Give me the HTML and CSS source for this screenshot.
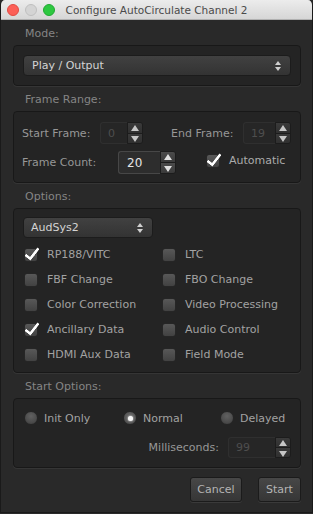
FILE: index.html
```html
<!DOCTYPE html>
<html lang="en">
<head>
  <meta charset="UTF-8">
  <title>Configure AutoCirculate Channel 2</title>
  <link rel="stylesheet" href="styles.css">
</head>
<body>
  <div class="window">
    <header class="titlebar">
      <div class="lights">
        <span class="light red"></span>
        <span class="light idle"></span>
        <span class="light green"></span>
      </div>
      <div class="title">Configure AutoCirculate Channel 2</div>
    </header>

    <main class="content">
      <div class="section-label">Mode:</div>
      <div class="group mode-group">
        <div class="select select-wide">
          <span>Play / Output</span>
          <svg class="updown" width="6" height="10" viewBox="0 0 6 10"><path d="M3 0 L6 4 L0 4 Z M0 6 L6 6 L3 10 Z" fill="#d0d0d0"/></svg>
        </div>
      </div>

      <div class="section-label">Frame Range:</div>
      <div class="group range-group">
        <div class="row">
          <span class="field-label start-label">Start Frame:</span>
          <div class="spin disabled">
            <span class="spin-value start-value">0</span>
            <span class="stepper"><span class="step up"></span><span class="step down"></span></span>
          </div>
          <span class="field-label end-label">End Frame:</span>
          <div class="spin disabled">
            <span class="spin-value end-value">19</span>
            <span class="stepper"><span class="step up"></span><span class="step down"></span></span>
          </div>
        </div>
        <div class="row">
          <span class="field-label count-label">Frame Count:</span>
          <div class="spin tall">
            <span class="spin-value count-value">20</span>
            <span class="stepper"><span class="step up"></span><span class="step down"></span></span>
          </div>
          <label class="check auto-check"><span class="box checked"></span><span>Automatic</span></label>
        </div>
      </div>

      <div class="section-label">Options:</div>
      <div class="group options-group">
        <div class="select select-small">
          <span>AudSys2</span>
          <svg class="updown" width="6" height="10" viewBox="0 0 6 10"><path d="M3 0 L6 4 L0 4 Z M0 6 L6 6 L3 10 Z" fill="#d0d0d0"/></svg>
        </div>
        <div class="check-grid">
          <label class="check"><span class="box checked"></span><span>RP188/VITC</span></label>
          <label class="check"><span class="box"></span><span>LTC</span></label>
          <label class="check"><span class="box"></span><span>FBF Change</span></label>
          <label class="check"><span class="box"></span><span>FBO Change</span></label>
          <label class="check"><span class="box"></span><span>Color Correction</span></label>
          <label class="check"><span class="box"></span><span>Video Processing</span></label>
          <label class="check"><span class="box checked"></span><span>Ancillary Data</span></label>
          <label class="check"><span class="box"></span><span>Audio Control</span></label>
          <label class="check"><span class="box"></span><span>HDMI Aux Data</span></label>
          <label class="check"><span class="box"></span><span>Field Mode</span></label>
        </div>
      </div>

      <div class="section-label">Start Options:</div>
      <div class="group start-group">
        <div class="radio-row">
          <label class="radio r-init"><span class="dot"></span><span>Init Only</span></label>
          <label class="radio r-normal"><span class="dot on"></span><span>Normal</span></label>
          <label class="radio r-delayed"><span class="dot"></span><span>Delayed</span></label>
        </div>
        <div class="ms-row">
          <span class="field-label">Milliseconds:</span>
          <div class="spin disabled">
            <span class="spin-value ms-value">99</span>
            <span class="stepper"><span class="step up"></span><span class="step down"></span></span>
          </div>
        </div>
      </div>

      <div class="buttons">
        <button class="btn cancel">Cancel</button>
        <button class="btn start">Start</button>
      </div>
    </main>
  </div>
</body>
</html>
```

FILE: styles.css
```css
body {
  margin: 0;
  padding: 0;
  background: #2a2a2a;
  font-family: 'DejaVu Sans', Verdana, sans-serif;
  font-size: 11px;
}

.window {
  width: 313px;
  height: 513px;
  background: #292929;
  border-radius: 5px 5px 0 0;
  overflow: hidden;
  box-sizing: border-box;
  border-left: 1px solid #1a1a1a;
  border-right: 1px solid #1a1a1a;
  border-bottom: 1px solid #1a1a1a;
}

/* title bar */
.titlebar {
  height: 20px;
  display: flex;
  align-items: center;
  position: relative;
  background: linear-gradient(to bottom, #ececec, #d6d6d6);
  border-bottom: 1px solid #b0b0b0;
  box-sizing: border-box;
}

.lights {
  display: flex;
  gap: 6px;
  padding-left: 6px;
}

.light {
  width: 12px;
  height: 12px;
  border-radius: 50%;
  box-sizing: border-box;
}

.light.red { background: #fc5f57; border: 1px solid #e04b43; }
.light.idle { background: #d4d4d4; border: 1px solid #bfbfbf; }
.light.green { background: #2dc840; border: 1px solid #22a833; }

.title {
  position: absolute;
  left: 0;
  right: 0;
  text-align: center;
  font-size: 10.5px;
  color: #4a4a4a;
}

/* content */
.content {
  padding: 0 11px 0 12px;
}

.section-label {
  height: 25px;
  box-sizing: border-box;
  padding: 6px 0 0 12px;
  line-height: 16px;
  color: #858585;
}

.group {
  border: 1px solid #181818;
  border-radius: 4px;
  background: #242424;
  box-shadow: 0 1px 0 #353535;
  box-sizing: border-box;
}

.mode-group {
  height: 41px;
  padding: 9px 9px 0 9px;
}

.select {
  height: 21px;
  box-sizing: border-box;
  display: flex;
  align-items: center;
  justify-content: space-between;
  padding: 0 9px 0 8px;
  border: 1px solid #1c1c1c;
  border-radius: 4px;
  background: linear-gradient(to bottom, #414141, #333333);
  color: #d4d4d4;
}

.select-small {
  width: 130px;
  padding-left: 7px;
}

/* frame range */
.range-group {
  height: 72px;
  padding: 10px 9px 0 8px;
}

.row {
  display: flex;
  align-items: center;
  height: 22px;
}

.row + .row {
  margin-top: 7px;
  height: 23px;
}

.field-label {
  color: #979797;
  flex: none;
}

.start-label { width: 78px; }
.end-label { width: 72px; margin-left: 28px; }
.count-label { width: 96px; }

.spin {
  display: flex;
  height: 22px;
  flex: none;
}

.spin.tall {
  height: 23px;
}

.spin-value {
  box-sizing: border-box;
  display: flex;
  align-items: center;
  padding-left: 7px;
  border: 1px solid #2f2f2f;
  border-right: none;
  border-radius: 3px 0 0 3px;
  background: #262626;
  color: #4e4e4e;
}

.start-value { width: 27px; }
.end-value { width: 32px; }
.ms-value { width: 47px; }

.count-value {
  width: 42px;
  padding-left: 8px;
  border: 1px solid #474747;
  border-right: none;
  background: #2d2d2d;
  color: #e4e4e4;
  font-size: 12px;
}

.stepper {
  width: 16px;
  display: flex;
  flex-direction: column;
  border: 1px solid #1c1c1c;
  border-radius: 0 3px 3px 0;
  box-sizing: border-box;
  overflow: hidden;
}

.step {
  flex: 1;
  position: relative;
  background: linear-gradient(to bottom, #4b4b4b, #3a3a3a);
}

.step + .step {
  border-top: 1px solid #1c1c1c;
}

.disabled .step {
  background: linear-gradient(to bottom, #3a3a3a, #303030);
}

.step::after {
  content: '';
  position: absolute;
  left: 50%;
  top: 50%;
  margin-left: -4px;
  border-left: 4px solid transparent;
  border-right: 4px solid transparent;
}

.step.up::after {
  margin-top: -3px;
  border-bottom: 6px solid #e0e0e0;
}

.step.down::after {
  margin-top: -2px;
  border-top: 6px solid #e0e0e0;
}

.disabled .step.up::after { border-bottom-color: #c6c6c6; }
.disabled .step.down::after { border-top-color: #c6c6c6; }

/* checkboxes */
.check {
  display: flex;
  align-items: center;
  gap: 9px;
  color: #a2a2a2;
  height: 25px;
}

.auto-check {
  margin-left: 30px;
  margin-top: -4px;
  color: #ababab;
}

.box {
  position: relative;
  width: 14px;
  height: 14px;
  flex: none;
  box-sizing: border-box;
  border: 1px solid #262626;
  border-radius: 3px;
  background: linear-gradient(to bottom, #585858, #424242);
}

.box.checked::after {
  content: '';
  position: absolute;
  left: 3px;
  top: -4px;
  width: 5px;
  height: 12px;
  border-right: 3px solid #ffffff;
  border-bottom: 3px solid #ffffff;
  transform: rotate(38deg);
  border-radius: 1px;
}

.options-group {
  height: 165px;
  padding: 8px 10px 0 9px;
}

.check-grid {
  display: grid;
  grid-template-columns: 138px 1fr;
  margin-top: 4px;
  padding-left: 1px;
}

/* start options */
.start-group {
  height: 70px;
  padding: 9px 9px 0 10px;
}

.radio-row {
  display: flex;
  height: 20px;
  align-items: center;
}

.radio {
  display: flex;
  align-items: center;
  gap: 6px;
  color: #a2a2a2;
  flex: none;
}

.r-init { width: 99px; }
.r-normal { width: 97px; }

.dot {
  width: 14px;
  height: 14px;
  border-radius: 50%;
  box-sizing: border-box;
  border: 1px solid #262626;
  background: radial-gradient(circle at 50% 35%, #616161, #3e3e3e);
  display: flex;
  align-items: center;
  justify-content: center;
}

.dot.on {
  background: radial-gradient(circle at 50% 40%, #6b6b6b, #474747);
}

.dot.on::after {
  content: '';
  width: 5px;
  height: 5px;
  border-radius: 50%;
  background: #f4f4f4;
  box-shadow: 0 0 2px #ffffff;
}

.ms-row {
  display: flex;
  justify-content: flex-end;
  align-items: center;
  gap: 9px;
  margin-top: 9px;
  height: 21px;
}

.ms-row .spin {
  height: 21px;
}

/* buttons */
.buttons {
  display: flex;
  justify-content: flex-end;
  gap: 16px;
  margin-top: 9px;
}

.btn {
  height: 25px;
  padding: 0;
  border: 1px solid #1b1b1b;
  border-radius: 3px;
  background: linear-gradient(to bottom, #474747, #363636);
  color: #b4b4b4;
  font-family: 'DejaVu Sans', Verdana, sans-serif;
  font-size: 11px;
  box-shadow: 0 1px 0 #3a3a3a;
}

.cancel { width: 52px; }
.start { width: 43px; }
```
